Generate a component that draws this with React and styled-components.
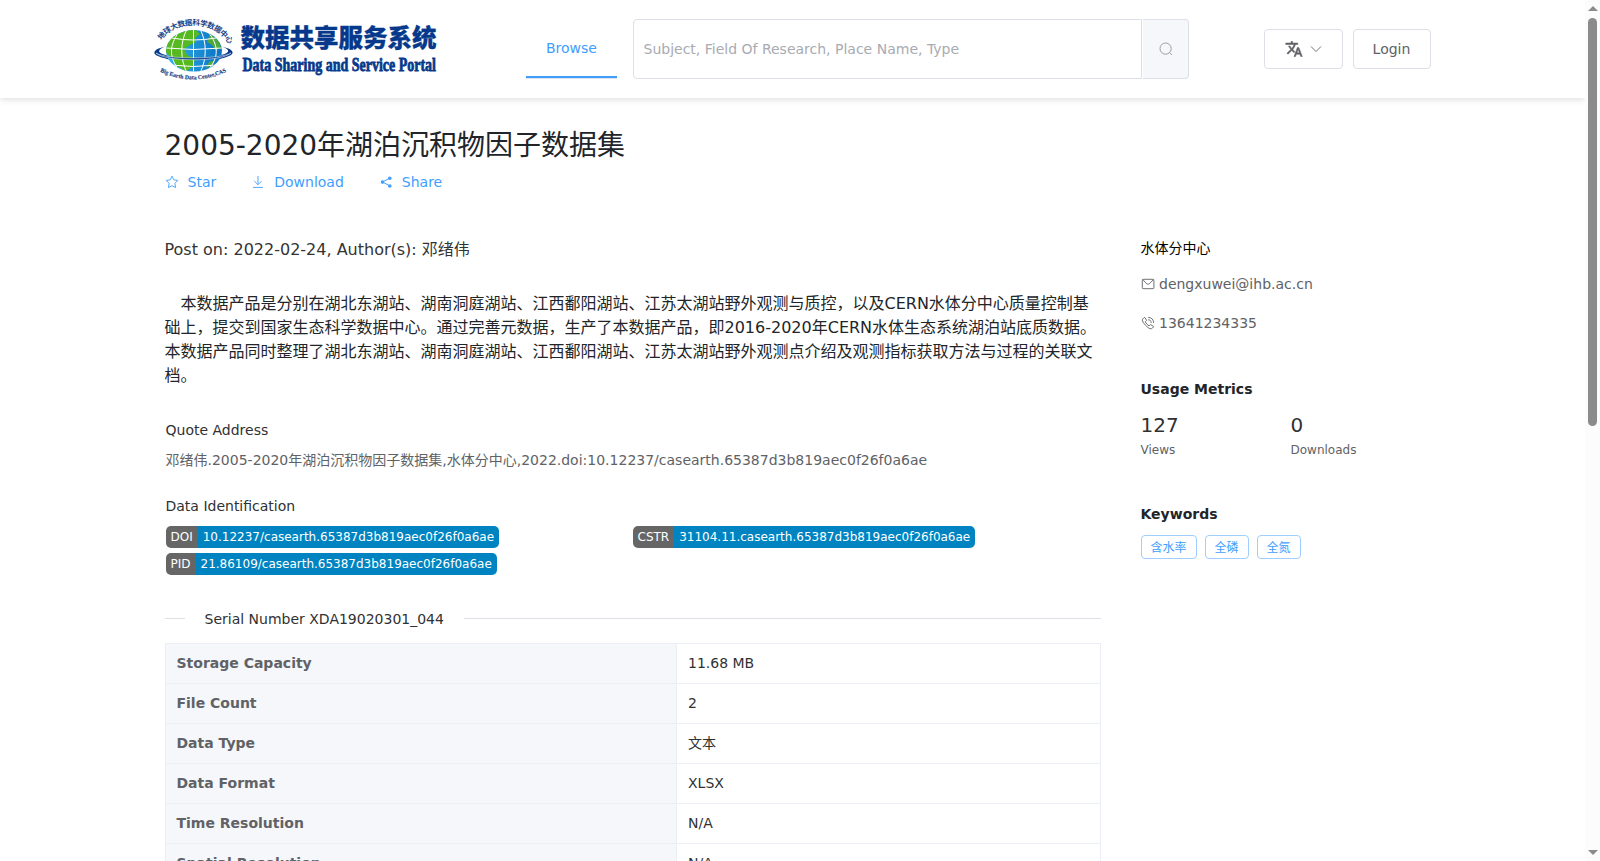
// React Imports
import React from 'react';

// Styles
import styled, { createGlobalStyle } from 'styled-components';

// Icons
import { MdTranslate } from 'react-icons/md';

const GlobalStyle = createGlobalStyle`
  * {
    box-sizing: border-box;
  }

  body {
    margin: 0;
    overflow: hidden;
    background: #fff;
    color: #212529;
    font-family: "DejaVu Sans", "Noto Sans CJK SC", sans-serif;
    font-size: 14px;
    line-height: 20px;
  }
`;

const Window = styled.div`
  display: flex;
  height: 100vh;
  overflow: hidden;
`;

const Page = styled.div`
  flex: 1;
  min-width: 0;
  overflow: hidden;
`;

const Header = styled.header`
  display: flex;
  align-items: center;
  height: 98px;
  padding-left: 155px;
  box-shadow: 0 2px 6px rgba(0, 0, 0, 0.12);
`;

const LogoSvg = styled.svg`
  display: block;
  flex: none;
  width: 284px;
  height: 66px;
  margin-right: 87px;
  overflow: visible;
`;

const NavItem = styled.a`
  width: 91px;
  height: 60px;
  margin: -2px 16px 0 0;
  border-bottom: 2px solid #409eff;
  box-shadow: 0 1px 0 #dfe3ec;
  color: #409eff;
  line-height: 61px;
  text-align: center;
`;

const SearchBox = styled.div`
  display: flex;
  width: 556px;
  height: 60px;
  margin-right: 75px;
`;

const SearchInput = styled.input`
  flex: 1;
  min-width: 0;
  height: 60px;
  padding: 0 9.5px;
  border: 1px solid #dcdfe6;
  border-radius: 4px 0 0 4px;
  outline: none;
  background: #fff;
  font-family: inherit;
  font-size: 14px;

  &::placeholder {
    color: #a8abb2;
    opacity: 1;
  }
`;

const SearchButton = styled.button`
  display: flex;
  align-items: center;
  justify-content: center;
  width: 46px;
  height: 60px;
  margin-left: 1px;
  padding: 0;
  border: 1px solid #dcdfe6;
  border-left: 0;
  border-radius: 0 4px 4px 0;
  background: #f5f7fa;
  color: #909399;
`;

const HeaderButton = styled.button`
  display: flex;
  align-items: center;
  justify-content: center;
  gap: 6px;
  width: ${(props) => props.$width}px;
  height: 40px;
  margin-right: 10px;
  padding: 0 1px 0 0;
  border: 1px solid #dcdfe6;
  border-radius: 4px;
  background: #fff;
  color: #606266;
  font-family: inherit;
  font-size: 14px;
`;

const TranslateIcon = styled(MdTranslate)`
  width: 18px;
  height: 18px;
  margin-left: 1px;
  stroke: currentColor;
  stroke-width: 0.7;

  path[fill="none"] {
    stroke: none;
  }
`;

const Container = styled.main`
  width: 1266px;
  margin-left: 164.5px;
  padding-top: 27px;
`;

const Title = styled.h1`
  margin: 0 0 5px;
  font-size: 28px;
  font-weight: 400;
  line-height: 42px;
`;

const Actions = styled.div`
  display: flex;
  height: 20px;
  margin-bottom: 46px;
  color: #409eff;
`;

const Action = styled.a`
  display: flex;
  align-items: center;
  gap: 9px;
  margin-right: 35px;
`;

const Columns = styled.div`
  display: flex;
  gap: 40px;
`;

const Article = styled.section`
  flex: none;
  width: 936px;
`;

const PostInfo = styled.div`
  color: #333;
  font-size: 16px;
  line-height: 24px;
`;

const Description = styled.p`
  margin: 30px 0 32px;
  font-size: 16px;
  line-height: 24px;
  text-indent: 16px;
`;

const Label = styled.div`
  padding-left: 1px;
  color: #303133;
`;

const Quote = styled.div`
  margin: 10px 0 26px;
  padding-left: 1px;
  color: #606266;
`;

const Badges = styled.div`
  display: grid;
  grid-template-columns: 467px 467px;
  row-gap: 5px;
  margin: 10px 0 34px;
  padding-left: 1px;
`;

const Badge = styled.div`
  display: flex;
  justify-self: start;
  height: 22px;
  overflow: hidden;
  border-radius: 5px;
  color: #fff;
  font-size: 12px;
  line-height: 22px;
`;

const BadgeKey = styled.span`
  padding: 0 5px;
  background: #666;
`;

const BadgeValue = styled.span`
  padding: 0 5px;
  background: #0084c1;
`;

const Divider = styled.div`
  display: flex;
  align-items: center;
  gap: 20px;
  height: 20px;
  margin-bottom: 14px;
  color: #303133;

  &::before,
  &::after {
    content: "";
    width: 20px;
    height: 1px;
    margin-top: -1px;
    background: #dcdfe6;
  }

  &::after {
    flex: 1;
  }
`;

const InfoTable = styled.dl`
  margin: 0;
  border: 1px solid #ebeef5;
  border-bottom: 0;
`;

const InfoRow = styled.div`
  display: flex;
  height: 40px;
  border-bottom: 1px solid #ebeef5;
  line-height: 39px;
`;

const InfoKey = styled.dt`
  width: 511px;
  padding-left: 11px;
  border-right: 1px solid #ebeef5;
  background: #f5f7fa;
  color: #606266;
  font-weight: 700;
`;

const InfoValue = styled.dd`
  margin: 0;
  padding-left: 11.5px;
  color: #303133;
`;

const Aside = styled.aside`
  flex: 1;
`;

const Organization = styled.div`
  margin-bottom: 16px;
  color: #000;
`;

const Contact = styled.div`
  display: flex;
  align-items: center;
  gap: 4.5px;
  margin-bottom: 19px;
  color: #606266;
`;

const AsideTitle = styled.h2`
  margin: ${(props) => props.$top}px 0 0;
  font-size: 14px;
  font-weight: 700;
  line-height: 20px;
`;

const Metrics = styled.div`
  display: flex;
  margin-top: 14px;
`;

const Metric = styled.div`
  width: 150px;
  color: #606266;
  font-size: 12px;
`;

const MetricValue = styled.div`
  margin-bottom: 3px;
  color: #303133;
  font-size: 20px;
  line-height: 24px;
`;

const Tags = styled.div`
  display: flex;
  gap: 8px;
  margin-top: 11px;
`;

const Tag = styled.span`
  height: 24px;
  padding: 0 9px;
  border: 1px solid #9fceff;
  border-radius: 4px;
  color: #409eff;
  font-size: 12px;
  line-height: 24px;
`;

const Scrollbar = styled.div`
  display: flex;
  flex: none;
  flex-direction: column;
  align-items: center;
  width: 15px;
  padding: 6px 0;
  background: #fcfcfc;
`;

const ScrollArrow = styled.span`
  width: 0;
  height: 0;
  border: solid transparent;
  border-width: ${(props) => (props.$down ? '5px 5px 0' : '0 5px 5px')};
  border-${(props) => (props.$down ? 'top' : 'bottom')}-color: #8b8b8b;
`;

const ScrollThumb = styled.span`
  width: 9px;
  height: 408px;
  margin: 7px 0 auto;
  border-radius: 5px;
  background: #8b8b8b;
`;

const LineIcon = styled.svg`
  display: block;
  flex: none;
  width: 14px;
  height: 14px;
  fill: none;
  stroke: currentColor;
  stroke-width: ${(props) => props.$stroke || 0.9};
`;

const SearchIcon = () => (
  <LineIcon viewBox="0 0 14 14">
    <circle cx="6.6" cy="6.6" r="5.6" />
    <path d="M10.7 10.7 L13 13" />
  </LineIcon>
);

const ArrowIcon = () => (
  <LineIcon viewBox="0 0 14 14">
    <path d="M2 4.5 L7 9.5 L12 4.5" />
  </LineIcon>
);

const StarIcon = () => (
  <LineIcon viewBox="0 0 14 14">
    <path d="M7 1.2 L8.8 4.8 L12.8 5.4 L9.9 8.3 L10.6 12.6 L7 10.7 L3.4 12.6 L4.1 8.3 L1.2 5.4 L5.2 4.8 Z" />
  </LineIcon>
);

const DownloadIcon = () => (
  <LineIcon viewBox="0 0 14 14">
    <path d="M7 1 V9.5 M3.3 6 L7 9.7 L10.7 6" />
    <path d="M2 12.4 H12" />
  </LineIcon>
);

const ShareIcon = () => (
  <LineIcon viewBox="0 0 14 14" $stroke={1}>
    <path d="M11 3 L3.5 7 L11 11" />
    <g fill="currentColor" stroke="none">
      <circle cx="10.8" cy="3.2" r="1.8" />
      <circle cx="3.5" cy="7.1" r="1.8" />
      <circle cx="10.8" cy="11" r="1.8" />
    </g>
  </LineIcon>
);

const MessageIcon = () => (
  <LineIcon viewBox="0 0 14 14">
    <rect x="1.3" y="2.3" width="11.6" height="9.4" rx="0.8" />
    <path d="M2 2.8 L5.8 6.8 Q7.1 7.8 8.4 6.8 L12.2 2.8" />
  </LineIcon>
);

const PhoneIcon = () => (
  <LineIcon viewBox="0 0 14 14" $stroke={0.9}>
    <path d="M3.2 1.5 L1.7 3 C0.8 4 1.5 5.5 3 7.5 C4.8 9.8 6.9 11.7 9 12.7 C10.3 13.1 11.2 12.5 12.4 11.1 L12.4 10.4 L9.7 8.6 L8.1 9.8 C6.6 9 5 7.4 4.3 5.8 L5.6 4.4 L3.9 1.5 Z" />
    <path d="M7.2 1.4 C10.5 1.4 12.7 3.7 12.6 6.9 M7.1 3.8 C9.1 3.8 10.3 5 10.2 6.9" />
  </LineIcon>
);

const Logo = () => (
  <LogoSvg viewBox="0 0 284 66">
    <defs>
      <clipPath id="globe">
        <ellipse cx="39" cy="34.8" rx="28" ry="20.7" />
      </clipPath>
      <linearGradient id="ocean" x1="0" x2="1">
        <stop offset="0" stopColor="#35b4e8" />
        <stop offset="1" stopColor="#0871c4" />
      </linearGradient>
      <path id="arcTop" d="M6.5 24.5 C19 4 58 4 72 25.5" />
      <path id="arcBottom" d="M5 55.5 Q38 71.5 73 55" />
    </defs>

    <path d="M10 30.5 C-4 34 -4 39 9 42 C25 47 52 47 68 42 C81 39 81 34 67 30.5 C76 34 75 37 66 39 C52 43 25 43 11 39 C2 37 2 34 10 30.5 Z" fill="#06398b" />
    <g clipPath="url(#globe)">
      <rect x="10" y="12" width="58" height="46" fill="url(#ocean)" />
      <path d="M10 36 L13 24 L22 14 L40 13 L45 18 L40 22 L41 26 L35 29 L29 33 L32 39 L40 43 L38 50 L31 56 L21 49 L17 42 Z" fill="#55b91f" />
      <path d="M55 18 L63 24 L66 31 L61 35 L57 29 L52 26 Z M54 46 L60 44 L57 50 L51 52 Z" fill="#4fa83c" />
      <g fill="none" stroke="#fff" strokeWidth="1">
        <path d="M38.5 12 V57 M32 13 C25 26 25 43 32 57 M24 16 C14 29 14 42 24 54 M45 13 C52 26 52 43 45 57 M53 16 C64 29 64 42 53 54" />
        <path d="M17 22 Q38 26 61 22 M11 32 Q38 35 67 32 M15 49 Q38 52 62 49" />
      </g>
    </g>
    <path d="M1 37 C10 46 67 46 76 37 C66 43.5 10 43.5 1 37 Z" fill="#06398b" stroke="#fff" strokeWidth="0.5" />

    <g fill="#173f88" fontWeight="700">
      <text fontFamily="'Noto Sans CJK SC', sans-serif" fontSize="7.6">
        <textPath href="#arcTop" textLength="79">地球大数据科学数据中心</textPath>
      </text>
      <text fontFamily="'Liberation Serif', serif" fontSize="5.8" stroke="#173f88" strokeWidth="0.15">
        <textPath href="#arcBottom">Big Earth Data Center,CAS</textPath>
      </text>
    </g>
    <g fill="#06398b" stroke="#06398b">
      <text x="85.5" y="31" fontFamily="'Noto Sans CJK SC', sans-serif" fontSize="24.5" fontWeight="900" strokeWidth="0.3" textLength="196">数据共享服务系统</text>
      <text x="87.5" y="55" fontFamily="'Liberation Serif', serif" fontSize="19" fontWeight="700" strokeWidth="0.8" textLength="193.5" lengthAdjust="spacingAndGlyphs">Data Sharing and Service Portal</text>
    </g>
  </LogoSvg>
);

const identifiers = [
  { name: 'DOI', value: '10.12237/casearth.65387d3b819aec0f26f0a6ae' },
  { name: 'CSTR', value: '31104.11.casearth.65387d3b819aec0f26f0a6ae' },
  { name: 'PID', value: '21.86109/casearth.65387d3b819aec0f26f0a6ae' },
];

const details = [
  { name: 'Storage Capacity', value: '11.68 MB' },
  { name: 'File Count', value: '2' },
  { name: 'Data Type', value: '文本' },
  { name: 'Data Format', value: 'XLSX' },
  { name: 'Time Resolution', value: 'N/A' },
  { name: 'Spatial Resolution', value: 'N/A' },
];

const keywords = ['含水率', '全磷', '全氮'];

const Appbar = () => (
  <Header>
    <Logo />
    <NavItem>Browse</NavItem>
    <SearchBox>
      <SearchInput placeholder="Subject, Field Of Research, Place Name, Type" />
      <SearchButton>
        <SearchIcon />
      </SearchButton>
    </SearchBox>
    <HeaderButton $width={79}>
      <TranslateIcon />
      <ArrowIcon />
    </HeaderButton>
    <HeaderButton $width={78}>Login</HeaderButton>
  </Header>
);

const DatasetArticle = () => (
  <Article>
    <PostInfo>Post on: 2022-02-24, Author(s): 邓绪伟</PostInfo>
    <Description>
      本数据产品是分别在湖北东湖站、湖南洞庭湖站、江西鄱阳湖站、江苏太湖站野外观测与质控，以及CERN水体分中心质量控制基础上，提交到国家生态科学数据中心。通过完善元数据，生产了本数据产品，即2016-2020年CERN水体生态系统湖泊站底质数据。本数据产品同时整理了湖北东湖站、湖南洞庭湖站、江西鄱阳湖站、江苏太湖站野外观测点介绍及观测指标获取方法与过程的关联文档。
    </Description>

    <Label>Quote Address</Label>
    <Quote>邓绪伟.2005-2020年湖泊沉积物因子数据集,水体分中心,2022.doi:10.12237/casearth.65387d3b819aec0f26f0a6ae</Quote>

    <Label>Data Identification</Label>
    <Badges>
      {identifiers.map((item) => (
        <Badge key={item.name}>
          <BadgeKey>{item.name}</BadgeKey>
          <BadgeValue>{item.value}</BadgeValue>
        </Badge>
      ))}
    </Badges>

    <Divider>Serial Number XDA19020301_044</Divider>
    <InfoTable>
      {details.map((item) => (
        <InfoRow key={item.name}>
          <InfoKey>{item.name}</InfoKey>
          <InfoValue>{item.value}</InfoValue>
        </InfoRow>
      ))}
    </InfoTable>
  </Article>
);

const DatasetAside = () => (
  <Aside>
    <Organization>水体分中心</Organization>
    <Contact>
      <MessageIcon />
      dengxuwei@ihb.ac.cn
    </Contact>
    <Contact>
      <PhoneIcon />
      13641234335
    </Contact>

    <AsideTitle $top={46}>Usage Metrics</AsideTitle>
    <Metrics>
      <Metric>
        <MetricValue>127</MetricValue>
        Views
      </Metric>
      <Metric>
        <MetricValue>0</MetricValue>
        Downloads
      </Metric>
    </Metrics>

    <AsideTitle $top={44}>Keywords</AsideTitle>
    <Tags>
      {keywords.map((word) => (
        <Tag key={word}>{word}</Tag>
      ))}
    </Tags>
  </Aside>
);

export default function App() {
  return (
    <>
      <GlobalStyle />
      <Window>
        <Page>
          <Appbar />
          <Container>
            <Title>2005-2020年湖泊沉积物因子数据集</Title>
            <Actions>
              <Action><StarIcon />Star</Action>
              <Action><DownloadIcon />Download</Action>
              <Action><ShareIcon />Share</Action>
            </Actions>
            <Columns>
              <DatasetArticle />
              <DatasetAside />
            </Columns>
          </Container>
        </Page>
        <Scrollbar>
          <ScrollArrow />
          <ScrollThumb />
          <ScrollArrow $down />
        </Scrollbar>
      </Window>
    </>
  );
}
